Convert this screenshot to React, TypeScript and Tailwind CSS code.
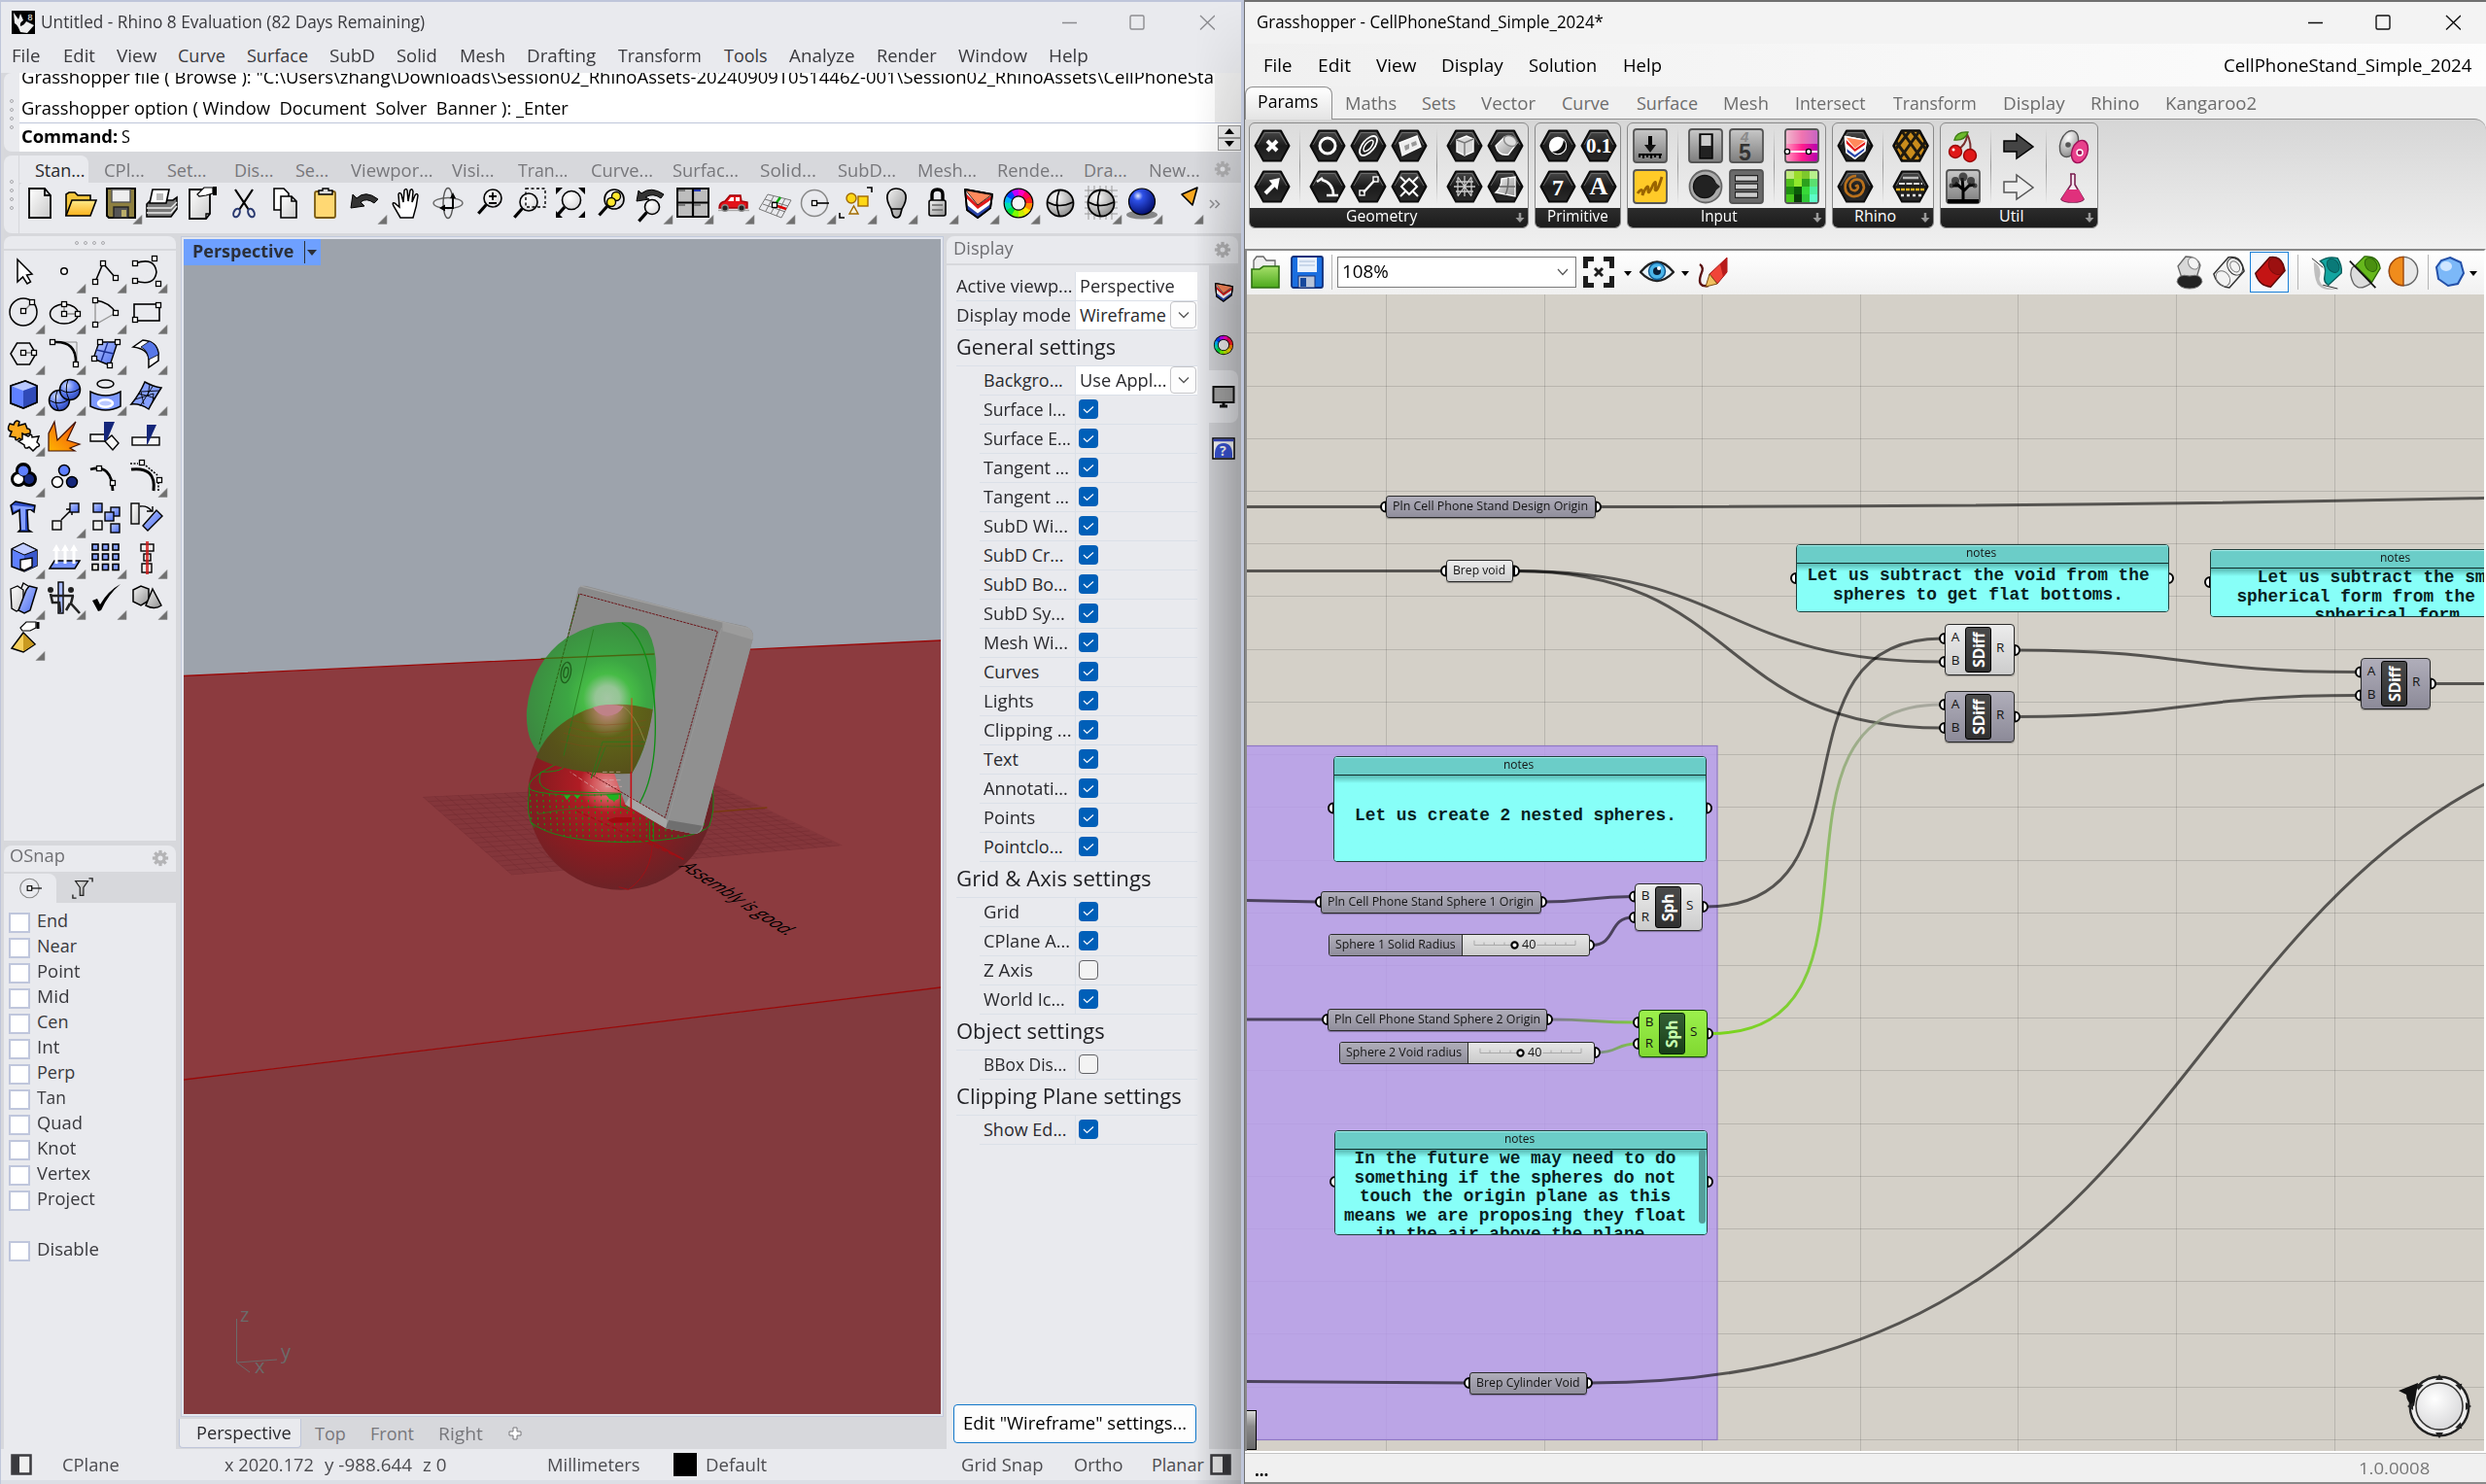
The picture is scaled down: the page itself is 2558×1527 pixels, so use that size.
import React, { useLayoutEffect, useRef, useState } from "react";
import type { ReactNode } from "react";

/* ---------- text helpers ---------- */

/** Single-line label squeezed or stretched to an exact width. */
function Fit({ w, className = "", children }: { w: number; className?: string; children: ReactNode }) {
  const ref = useRef<HTMLSpanElement>(null);
  const [scale, setScale] = useState(1);
  useLayoutEffect(() => {
    if (ref.current) setScale(w / ref.current.offsetWidth);
  }, [w]);
  return (
    <span className={`inline-block shrink-0 whitespace-pre text-left ${className}`} style={{ width: w }}>
      <span ref={ref} className="inline-block origin-left" style={{ transform: `scaleX(${scale})` }}>
        {children}
      </span>
    </span>
  );
}

type Slot = [string, number, number];

/** Labels in a row: [text, start, text width]; each slot runs to the next start. */
function Labels({ items }: { items: Slot[] }) {
  return (
    <>
      {items.map(([t, x, w], i) => (
        <span key={i} className="shrink-0" style={{ width: i + 1 < items.length ? items[i + 1][1] - x : w }}>
          <Fit w={w}>{t}</Fit>
        </span>
      ))}
    </>
  );
}

function Gear({ className = "" }: { className?: string }) {
  return (
    <svg viewBox="0 0 20 20" className={`size-[18px] shrink-0 ${className}`}>
      <g fill="#b4b4b6">
        {[0, 45, 90, 135].map((a) => (
          <rect key={a} x="8.2" y="1" width="3.6" height="18" transform={`rotate(${a} 10 10)`} />
        ))}
        <circle cx="10" cy="10" r="6.5" />
      </g>
      <circle cx="10" cy="10" r="2.8" fill="#e9eaee" />
    </svg>
  );
}

function Cell({ children, more }: { children?: ReactNode; more?: boolean }) {
  return (
    <svg viewBox="0 0 42 42" className="size-[42px] shrink-0 overflow-visible" fill="none" stroke="#000" strokeWidth="1.4">
      {children}
      {more && <path d="M42 33.5V42.5H33Z" fill="#707070" stroke="#8a8a8a" strokeWidth=".6" />}
    </svg>
  );
}

const Sq = ({ x, y }: { x: number; y: number }) => (
  <rect x={x - 2.5} y={y - 2.5} width="5" height="5" fill="#fff" stroke="#000" strokeWidth="1.3" />
);

/* ---------- shared gradients ---------- */

function Defs() {
  return (
    <svg className="absolute size-0">
      <defs>
        <linearGradient id="paper" x1="0" y1="0" x2="1" y2="1">
          <stop offset="0" stopColor="#fff" />
          <stop offset="1" stopColor="#c9c9c9" />
        </linearGradient>
        <linearGradient id="yellow" x1="0" y1="0" x2="0" y2="1">
          <stop offset="0" stopColor="#ffe98a" />
          <stop offset="1" stopColor="#fbb11c" />
        </linearGradient>
        <linearGradient id="orange" x1="0" y1="1" x2="1" y2="0">
          <stop offset="0" stopColor="#ffb400" />
          <stop offset="1" stopColor="#f04a10" />
        </linearGradient>
        <linearGradient id="blue" x1="0" y1="0" x2="1" y2="1">
          <stop offset="0" stopColor="#b9c8ff" />
          <stop offset="1" stopColor="#4a6cf0" />
        </linearGradient>
        <linearGradient id="gray" x1="0" y1="0" x2="1" y2="1">
          <stop offset="0" stopColor="#f4f4f4" />
          <stop offset="1" stopColor="#8f8f8f" />
        </linearGradient>
        <radialGradient id="bball" cx=".35" cy=".3" r=".75">
          <stop offset="0" stopColor="#cfdcff" />
          <stop offset=".5" stopColor="#5d7df2" />
          <stop offset="1" stopColor="#2c47b8" />
        </radialGradient>
        <radialGradient id="navy" cx=".35" cy=".28" r=".75">
          <stop offset="0" stopColor="#dfe8ff" />
          <stop offset=".25" stopColor="#2d50e8" />
          <stop offset="1" stopColor="#020d6b" />
        </radialGradient>
        <radialGradient id="gball" cx=".35" cy=".3" r=".75">
          <stop offset="0" stopColor="#fff" />
          <stop offset="1" stopColor="#8c8c8c" />
        </radialGradient>
        <radialGradient id="lens" cx=".4" cy=".35" r=".75">
          <stop offset="0" stopColor="#fff" />
          <stop offset="1" stopColor="#d4d4d6" />
        </radialGradient>
        <linearGradient id="hex" x1="0" y1="0" x2="0" y2="1">
          <stop offset="0" stopColor="#4a4a4a" />
          <stop offset=".5" stopColor="#1b1b1b" />
          <stop offset="1" stopColor="#2a2a2a" />
        </linearGradient>
        <linearGradient id="tile" x1="0" y1="0" x2="0" y2="1">
          <stop offset="0" stopColor="#c8c8c8" />
          <stop offset="1" stopColor="#7d7d7d" />
        </linearGradient>
        <linearGradient id="pink" x1="0" y1="0" x2="1" y2="0">
          <stop offset="0" stopColor="#ff9fc4" />
          <stop offset=".5" stopColor="#ff1e8c" />
          <stop offset="1" stopColor="#b300b0" />
        </linearGradient>
        <linearGradient id="fold" x1="0" y1="0" x2="0" y2="1">
          <stop offset="0" stopColor="#a6e06a" />
          <stop offset="1" stopColor="#4ca91c" />
        </linearGradient>
      </defs>
    </svg>
  );
}

function ColorWheel({ cx, cy, r, w }: { cx: number; cy: number; r: number; w: number }) {
  const c = ["#00e0b0", "#00e040", "#7dff00", "#c8f000", "#ffe600", "#ff8a00", "#ff2020", "#ff0060", "#ff00c0", "#c000ff", "#0040ff", "#00b0ff"].reverse();
  const L = 2 * Math.PI * r;
  return (
    <g>
      <circle cx={cx} cy={cy} r={r} stroke="#000" strokeWidth={w + 2.4} fill="#f4f4f4" />
      {c.map((k, i) => (
        <circle key={k} cx={cx} cy={cy} r={r} stroke={k} strokeWidth={w} fill="none" strokeDasharray={`${L / 12 + 0.4} ${L}`} transform={`rotate(${180 + i * 30} ${cx} ${cy})`} />
      ))}
    </g>
  );
}

const LayerIcon = () => (
  <g strokeLinejoin="round">
    <path d="M7 7L35 12L33 26L20 36L9 28Z" fill="#fff" strokeWidth="1.800" />
    <path d="M8 11L20 23L35 13L34.500 17L20 27L8.500 16Z" fill="#e01818" stroke="none" />
    <path d="M9 23L20 31.500L34 21.500L33 26L20 36L9 28Z" fill="#2743a8" stroke="none" />
    <path d="M7 7L35 12L20 23Z" fill="#ff8a5c" strokeWidth=".8" />
    <path d="M7 7L35 12L33 26L20 36L9 28Z" strokeWidth="1.800" fill="none" />
  </g>
);

/* ---------- main toolbar icons ---------- */

const mag = (cx: number, cy: number, r: number) => (
  <>
    <path d={`M${cx - r * 0.75} ${cy + r * 0.75}L${cx - r * 0.75 - 8} ${cy + r * 0.75 + 9}`} strokeWidth="3.2" />
    <circle cx={cx} cy={cy} r={r} fill="url(#lens)" strokeWidth="1.6" />
  </>
);
const undo = <path d="M5 26L7 12L11 16Q20 7 33 17L29 21Q21 15 15 20L19 24Z" fill="#333" strokeWidth="1" />;

const topIcons: [ReactNode, boolean][] = [
  [<path d="M10 6H26L32 13V36H10Z M26 6V13H32" fill="url(#paper)" strokeWidth="1.8" />, false],
  [
    <>
      <path d="M6 34V12L9 10H15L18 13H31V18" fill="#f4c63c" strokeWidth="1.6" />
      <path d="M6 34L12 18H37L31 34Z" fill="url(#yellow)" strokeWidth="1.6" />
    </>,
    false,
  ],
  [
    <>
      <path d="M6 6H35V36H8L6 34Z" fill="#8e8040" strokeWidth="2" />
      <rect x="11" y="7" width="19" height="13" fill="#eee" stroke="#555" />
      <rect x="13" y="25" width="15" height="11" fill="#555" stroke="#222" />
      <rect x="21" y="28" width="5" height="7" fill="#b9ad6a" stroke="none" />
    </>,
    true,
  ],
  [
    <>
      <path d="M5 22L9 18H32L36 15V27L30 35H5Z" fill="#777" strokeWidth="1.6" />
      <path d="M11 7H28L25 21H8Z" fill="#fff" strokeWidth="1.6" />
      <rect x="15" y="11" width="7" height="7" fill="#bbb" stroke="none" />
      <path d="M5 26H30L36 20M5 31H30L36 24" stroke="#eee" />
    </>,
    false,
  ],
  [
    <>
      <path d="M7 7H28V32L24 37H7Z" fill="url(#paper)" strokeWidth="1.8" />
      <path d="M24 37V32H28" />
      <path d="M15 12L22 5L31 5V11L24 13L17 14Z" fill="#fff" strokeWidth="1.2" />
      <path d="M33 4V13" strokeWidth="4" />
    </>,
    false,
  ],
  [
    <>
      <path d="M12 7L26 28M30 7L16 28" strokeWidth="2.2" />
      <ellipse cx="13.5" cy="31" rx="3" ry="4.5" stroke="#2a3a70" strokeWidth="2" transform="rotate(25 13.5 31)" />
      <ellipse cx="28.5" cy="31" rx="3" ry="4.5" stroke="#2a3a70" strokeWidth="2" transform="rotate(-25 28.5 31)" />
    </>,
    false,
  ],
  [
    <>
      <path d="M10 6H20L25 11V28H10Z" fill="#fff" strokeWidth="1.6" />
      <path d="M17 14H28L33 19V36H17Z M28 14V19H33" fill="url(#paper)" strokeWidth="1.6" />
    </>,
    false,
  ],
  [
    <>
      <rect x="10" y="9" width="21" height="27" rx="2" fill="#ffd873" stroke="#7a5a10" strokeWidth="1.8" />
      <path d="M14 12V8H18V6H24V8H28V12Z" fill="#ddd" strokeWidth="1.4" />
    </>,
    false,
  ],
  [undo, true],
  [
    <path d="M14 36L7 24Q5 20 8 21L13 25L12 12Q13 9 15 12L17 20L18 8Q20 5 21 8L22 19L24 8Q26 5 27 9L26 20L29 13Q31 10 32 13Q31 24 27 36Z" fill="#fff" strokeWidth="1.5" />,
    false,
  ],
  [
    <>
      <ellipse cx="21" cy="21" rx="15" ry="5.5" stroke="#666" />
      <ellipse cx="21" cy="21" rx="5" ry="15.5" stroke="#555" />
      <path d="M26 14V27M16 26H27" strokeWidth="2" />
      <path d="M23 16L26 10L29 16ZM12 26L18 22.500V29.500Z" fill="#000" stroke="none" />
    </>,
    false,
  ],
  [
    <>
      {mag(25, 16, 9)}
      <path d="M21 14H29M25 10V18M21 21H29" strokeWidth="1.8" />
    </>,
    false,
  ],
  [
    <>
      {mag(20, 20, 9)}
      <rect x="17" y="6" width="20" height="19" strokeDasharray="3 2.5" />
    </>,
    false,
  ],
  [
    <>
      {mag(22, 18, 9.5)}
      <path d="M6 5H13L6 12ZM36 5H29L36 12ZM6 36V29L13 36ZM36 36V29L29 36Z" fill="#000" stroke="none" />
    </>,
    false,
  ],
  [
    <>
      {mag(24, 17, 10)}
      <circle cx="26" cy="14" r="4.5" fill="#ffe92e" />
      <circle cx="21" cy="20" r="4.5" fill="#ffe92e" />
    </>,
    false,
  ],
  [
    <>
      <path d="M5 19L7 8L10 11Q20 3 33 12L30 16Q22 10 14 15L18 17Z" fill="#333" strokeWidth="1" />
      {mag(21, 25, 7.5)}
    </>,
    true,
  ],
  [
    <>
      <rect x="5" y="6" width="32" height="29" fill="#bdbdbd" strokeWidth="2" />
      <path d="M5 20.5H37M21 6V35" strokeWidth="2.2" />
      <path d="M6 8H13M6 23H13M22 23H29" stroke="#777" strokeWidth="2" />
      <path d="M22 8H29" stroke="#2438b0" strokeWidth="2" />
    </>,
    true,
  ],
  [
    <>
      <path d="M6 26Q6 20 12 19L17 13H28L29 19L35 20V26Z" fill="#e3121a" stroke="#a00008" />
      <path d="M15 19L18 15H21V19ZM23 15H27V19H23Z" fill="#fff" stroke="none" />
      <path d="M5 28.5H37" stroke="#aaa" />
      <circle cx="12" cy="26" r="3.2" fill="#222" stroke="#888" />
      <circle cx="29" cy="26" r="3.2" fill="#222" stroke="#888" />
    </>,
    true,
  ],
  [
    <>
      <path d="M14 12L38 18L28 36L5 27ZM9 22L32 30M11 17L35 24M20 14L12 29M26 15L17 32M32 16L23 34" stroke="#777" strokeWidth="1" />
      <path d="M21 23L33 27" stroke="#d00" strokeWidth="2.4" />
      <path d="M22 22L27 15" stroke="#0a0" strokeWidth="2.4" />
      <Sq x={21} y={23} />
    </>,
    true,
  ],
  [
    <>
      <circle cx="20" cy="21" r="13.5" stroke="#888" strokeWidth="1.5" />
      <path d="M20 21H35" strokeWidth="1.6" />
      <Sq x={20} y={21} />
    </>,
    true,
  ],
  [
    <>
      <path d="M32 5H37V10M4 31V36H9" strokeWidth="1.6" />
      <circle cx="16" cy="16" r="5" fill="#ffd815" stroke="#a06a00" />
      <rect x="23" y="14" width="10" height="10" fill="#ffd815" stroke="#a06a00" />
      <path d="M14 32L18.500 24L23 32Z" stroke="#a06a00" fill="#f6f1dd" />
    </>,
    true,
  ],
  [<path d="M16 31L15 27Q10 19 11 13Q13 6 20 6Q28 6 30 13Q31 19 26 27L25 31Q24 36 20.500 36Q17 36 16 31ZM15 27H26" fill="url(#gray)" strokeWidth="1.7" />, true],
  [
    <>
      <path d="M15 18V12Q15 7 20.500 7Q26 7 26 12V18" strokeWidth="3.4" />
      <rect x="12" y="18" width="17" height="16" rx="2" fill="url(#gray)" strokeWidth="1.6" />
      <path d="M15 23H26M15 28H26" stroke="#666" />
    </>,
    true,
  ],
  [<LayerIcon />, true],
  [<ColorWheel cx={20} cy={21} r={11} w={6.5} />, true],
  [
    <>
      <circle cx="21" cy="21" r="13.500" fill="url(#gball)" strokeWidth="1.8" />
      <path d="M8 20Q20 27 34 20M20 8Q15 20 20 34" strokeWidth="1.6" />
    </>,
    false,
  ],
  [
    <>
      <path d="M8 3V38M14 3V38M20 3V38M26 3V38M32 3V38M4 8H38M4 14H38M4 20H38M4 26H38M4 32H38" stroke="#999" strokeWidth="1" />
      <circle cx="21" cy="21" r="13.500" fill="url(#gball)" strokeWidth="1.8" />
      <path d="M8 20Q20 27 34 20M20 8Q15 20 20 34" strokeWidth="1.6" />
    </>,
    true,
  ],
  [
    <>
      <ellipse cx="21" cy="33" rx="16" ry="4.500" fill="#444" fillOpacity=".6" stroke="none" />
      <circle cx="21" cy="19.500" r="13.500" fill="url(#navy)" strokeWidth="1.200" />
    </>,
    true,
  ],
  [<path d="M20 12L36 5L31 23Z" fill="#f8a820" strokeWidth="1.6" strokeLinejoin="round" />, true],
];

/* ---------- left tool icons ---------- */

const box = (
  <>
    <path d="M7 12L22 7L34 12V29L20 35L7 30Z" fill="#5f80ff" strokeWidth="1.6" strokeLinejoin="round" />
    <path d="M7 12L22 7L34 12L20 17Z" fill="#b9c8ff" stroke="none" />
    <path d="M34 12V29L20 35V17Z" fill="#2f4ab8" stroke="none" />
    <path d="M7 12L22 7L34 12V29L20 35L7 30Z" strokeWidth="1.600" strokeLinejoin="round" />
  </>
);

const tools: [ReactNode, boolean][] = [
  [<path d="M14 8V31L19.500 26L24 33L27.500 31L23.500 24L29 23Z" fill="#fff" strokeWidth="1.500" />, false],
  [<circle cx="20" cy="20" r="3.300" fill="#fff" strokeWidth="1.500" />, true],
  [
    <>
      <path d="M10 31L18 12L31 27" strokeWidth="1.600" />
      <Sq x={10} y={31} /><Sq x={18} y={12} /><Sq x={31} y={27} />
    </>,
    true,
  ],
  [
    <>
      <path d="M9 12Q29 5 31 21Q29 36 9 30" strokeWidth="1.600" />
      <Sq x={9} y={12} /><Sq x={29} y={7} /><Sq x={9} y={30} /><Sq x={33} y={33} />
    </>,
    true,
  ],
  [
    <>
      <circle cx="20" cy="20" r="14" strokeWidth="1.500" />
      <path d="M20 20L29 10" stroke="#888" />
      <Sq x={20} y={19} /><Sq x={29} y={10} />
    </>,
    true,
  ],
  [
    <>
      <ellipse cx="20" cy="22" rx="14.500" ry="10" strokeWidth="1.500" />
      <path d="M20 22V12M20 22H34" stroke="#888" />
      <Sq x={20} y={22} /><Sq x={20} y={12} /><Sq x={34} y={22} />
    </>,
    true,
  ],
  [
    <>
      <path d="M10 8V33L31 21" stroke="#999" />
      <path d="M10 8Q25 10 31 21" strokeWidth="1.600" />
      <Sq x={10} y={8} /><Sq x={10} y={33} /><Sq x={31} y={21} />
    </>,
    true,
  ],
  [
    <>
      <rect x="8" y="12" width="26" height="17" strokeWidth="1.600" />
      <Sq x={33} y={13} /><Sq x={9} y={28} />
    </>,
    true,
  ],
  [
    <>
      <path d="M7 21L13.500 10H26.500L33 21L26.500 32H13.500Z" strokeWidth="1.500" />
      <path d="M20 20H31" stroke="#777" />
      <Sq x={20} y={20} /><Sq x={31} y={20} />
    </>,
    true,
  ],
  [
    <>
      <path d="M10 9H33V31" stroke="#888" strokeWidth="1" />
      <path d="M10 9Q33 8 32 31" strokeWidth="2.600" />
      <Sq x={8} y={9} /><Sq x={32} y={32} />
    </>,
    true,
  ],
  [
    <>
      <path d="M14 9L33 9L25 33L8 26Z" fill="url(#blue)" strokeWidth="1.400" />
      <path d="M23 9L16 29M11 17L29 21" stroke="#1a2f90" />
      <Sq x={15} y={9} /><Sq x={33} y={9} /><Sq x={9} y={26} /><Sq x={25} y={33} />
    </>,
    true,
  ],
  [
    <>
      <path d="M7 14L17 7Q31 8 33 20V28L23 35V26Q22 16 7 14Z" fill="#fff" strokeWidth="1.500" />
      <path d="M15 14L24 8Q31 11 33 20V22L23 27Q22 17 15 14Z" fill="#5878e8" strokeWidth=".8" />
    </>,
    true,
  ],
  [box, true],
  [
    <>
      <circle cx="15" cy="27" r="10.500" fill="url(#bball)" strokeWidth="1.500" />
      <path d="M5 27Q15 33 25 26M13 17Q9 27 14 37" strokeWidth="1" />
      <circle cx="26" cy="16" r="10.500" fill="url(#bball)" strokeWidth="1.500" />
      <path d="M16 16Q26 22 36 15M24 6Q20 16 25 26" strokeWidth="1" />
    </>,
    true,
  ],
  [
    <>
      <ellipse cx="20.500" cy="10" rx="8.500" ry="4" strokeWidth="1.500" />
      <path d="M5 18Q21 26 36 18V33Q21 41 5 33Z" fill="#7d99ff" strokeWidth="1.500" />
      <ellipse cx="20.500" cy="30" rx="7.500" ry="3.800" stroke="#fff" strokeWidth="2.600" fill="#b9c8ff" />
    </>,
    true,
  ],
  [
    <>
      <path d="M19 8Q28 13 36 14Q27 28 23 36Q14 30 5 31Q14 20 19 8Z" fill="#86a0ff" strokeWidth="1.500" />
      <path d="M12 20Q22 22 30 25M9 26L28 20L27 29M28 11Q20 24 14 33M18 31L15 18L34 17M24 11L22 22" strokeWidth=".9" />
    </>,
    true,
  ],
  [
    <>
      <path d="M6 9L10 10Q12 4 16 7L15 11L22 9L24 14Q28 14 27 19L22 20L20 27L16 24Q11 28 12 23L6 22L8 17Q2 16 6 9Z" fill="#f9a81c" strokeWidth="1.500" />
      <path d="M19 19L25 22Q29 18 29 23L36 22L34 28Q39 32 34 33L30 37L26 33Q21 36 21 31L15 27L19 25Z" fill="#fff" strokeWidth="1.500" />
    </>,
    true,
  ],
  [<path d="M4 37V19L10 7L13 26L32 7L23 26L36 30L26 34L31 37Z" fill="url(#orange)" strokeWidth="1.200" stroke="#401000" />, false],
  [
    <>
      <path d="M5 20H20L23 27H5Z" fill="#f6f6f6" />
      <path d="M20 27L27 21L34 29L28 36Z" fill="#f6f6f6" />
      <path d="M19 7H30L22 26H19Z" fill="#14267a" stroke="none" />
    </>,
    false,
  ],
  [
    <>
      <rect x="6" y="23" width="28" height="8" fill="#f6f6f6" />
      <path d="M21 10H31L22 30H21Z" fill="#14267a" stroke="none" />
    </>,
    false,
  ],
  [
    <>
      <g strokeWidth="6"><circle cx="20" cy="15" r="5" /><circle cx="15" cy="24" r="5" /><circle cx="26" cy="24" r="5" /></g>
      <circle cx="15" cy="24" r="5" fill="#fff" stroke="none" />
      <circle cx="26" cy="24" r="5" fill="#14267a" stroke="none" />
      <circle cx="20" cy="15.500" r="5.500" fill="#5f80ff" strokeWidth=".8" />
    </>,
    true,
  ],
  [
    <>
      <circle cx="20" cy="15" r="5.500" fill="#5f80ff" strokeWidth="1.500" />
      <circle cx="13" cy="27" r="5.500" fill="#fff" strokeWidth="1.500" />
      <circle cx="28" cy="27" r="5.500" fill="#14267a" strokeWidth="1.500" />
    </>,
    false,
  ],
  [
    <>
      <path d="M5 14Q27 8 28 36" strokeWidth="2.800" />
      <Sq x={14} y={13} /><Sq x={28} y={28} />
    </>,
    false,
  ],
  [
    <>
      <path d="M5 14Q31 11 28 36" strokeWidth="3" />
      <path d="M4 8H12M20 10L32 20M33 27V37" strokeDasharray="2 1.500" strokeWidth="1.600" />
      <Sq x={16} y={7} /><Sq x={34} y={25} />
    </>,
    true,
  ],
  [
    <>
      <path d="M7 9L12 5L32 9L31 16L27 13L24 14L25 34L28 36H15L17 34L16 14L9 18Z" fill="#2a49c0" strokeWidth="1.500" />
      <path d="M9 9L31 11L29 13L22 13V34L18 34L17 12L10 15Z" fill="#86a0ff" stroke="none" />
    </>,
    false,
  ],
  [
    <>
      <path d="M17 24L28 13M22 13H28V19" strokeWidth="1.500" />
      <rect x="8" y="25" width="9" height="9" fill="#eee" />
      <rect x="26" y="7" width="9" height="9" fill="url(#blue)" />
    </>,
    true,
  ],
  [
    <>
      <rect x="8" y="7" width="9" height="9" fill="url(#blue)" />
      <rect x="26" y="11" width="9" height="9" fill="url(#blue)" />
      <rect x="20" y="16" width="9" height="9" fill="url(#blue)" />
      <rect x="8" y="25" width="9" height="9" fill="#eee" />
      <rect x="26" y="28" width="9" height="9" fill="url(#blue)" />
    </>,
    false,
  ],
  [
    <>
      <rect x="5" y="7" width="8" height="21" fill="url(#paper)" />
      <path d="M14 10Q22 9 26 15M21 15H27V10" />
      <path d="M17 30L31 14L37 20L22 35Z" fill="url(#blue)" />
    </>,
    false,
  ],
  [
    <>
      <path d="M8 12L20 6L34 13V29L21 35L8 30Z" fill="#5f80ff" strokeWidth="1.500" />
      <path d="M34 13V29L21 35V18Z" fill="#3a58cc" stroke="none" />
      <path d="M8 12L20 6L34 13L21 18Z" fill="#c0ccff" strokeWidth="1" />
      <path d="M17 23L29 21V30L21 34L17 32Z" fill="#fff" />
    </>,
    true,
  ],
  [
    <>
      <path d="M5 32L10 24H36L31 32Z" fill="#7390ff" strokeWidth="1.500" />
      <path d="M12 27V12M21 27V12M30 27V12" stroke="#fff" strokeWidth="3" />
      <path d="M8 14L12 7L16 14ZM17 14L21 7L25 14ZM26 14L30 7L34 14Z" fill="#fff" stroke="none" />
    </>,
    true,
  ],
  [
    <>
      {[8, 18.500, 29].map((x) =>
        [8, 18, 28.500].map((y) => (
          <rect key={`${x}-${y}`} x={x - 1} y={y - 1} width="6" height="6" fill={x === 8 && y > 28 ? "#f2f2e6" : "#86a0ff"} strokeWidth="1.600" />
        )),
      )}
    </>,
    true,
  ],
  [
    <>
      <rect x="15" y="7" width="13" height="7" fill="#eee" /><rect x="18" y="17" width="7" height="7" fill="#eee" /><rect x="16" y="27" width="10" height="9" fill="#eee" />
      <path d="M21.500 4V38" stroke="#d01818" strokeWidth="3" strokeOpacity=".8" />
    </>,
    true,
  ],
  [
    <>
      <path d="M7 11L14 8L20 12V30L13 34L8 31Z" fill="url(#paper)" strokeWidth="1.300" />
      <path d="M18 10L20 5L25 8" />
      <path d="M26 8L34 10L27 33L21 36L15 33L23 12Z" fill="url(#blue)" strokeWidth="1.500" />
    </>,
    true,
  ],
  [
    <>
      <rect x="14" y="4" width="5" height="32" fill="#a7baff" />
      <circle cx="6" cy="12" r="3" fill="#222" stroke="none" /><circle cx="27" cy="12" r="3" fill="#222" stroke="none" />
      <path d="M6 16L8 25H15L16 35M6 18H30M29 18L27 26L36 36M26 26L22 33" stroke="#222" strokeWidth="2.600" />
    </>,
    true,
  ],
  [<path d="M7 23L12 21L15 27Q23 13 36 6Q23 17 16 33L13 34Z" fill="#000" stroke="none" />, true],
  [
    <>
      <path d="M7 12L15 8L23 11V23L15 28L7 24Z" fill="url(#gray)" strokeWidth="1.500" />
      <path d="M27 11L36 28Q29 33 20 28Z" fill="url(#gray)" strokeWidth="1.500" />
    </>,
    true,
  ],
  [
    <>
      <path d="M17 9L23 3H33V9L27 12H19Z" fill="#fff" strokeWidth="1.200" />
      <path d="M35 3V10" strokeWidth="3" />
      <path d="M20 14L32 26L20 34L8 30Z" fill="#f6d05c" strokeWidth="1.500" />
      <path d="M20 15L31 26L20 33Z" fill="#c99a20" stroke="none" />
    </>,
    true,
  ],
];

/* ---------- Rhino window ---------- */

const rhinoMenu: Slot[] = [
  ["File", 12, 30], ["Edit", 65, 33], ["View", 120, 41], ["Curve", 183, 49], ["Surface", 254, 63], ["SubD", 339, 47],
  ["Solid", 408, 42], ["Mesh", 473, 47], ["Drafting", 542, 71], ["Transform", 636, 86], ["Tools", 745, 45],
  ["Analyze", 812, 68], ["Render", 902, 62], ["Window", 986, 71], ["Help", 1079, 41],
];
const rhinoTabs: Slot[] = [
  ["CPl...", 107, 42], ["Set...", 172, 41], ["Dis...", 241, 40], ["Se...", 304, 34], ["Viewpor...", 361, 85],
  ["Visi...", 465, 44], ["Tran...", 533, 52], ["Curve...", 608, 64], ["Surfac...", 692, 68], ["Solid...", 782, 58],
  ["SubD...", 862, 60], ["Mesh...", 944, 61], ["Rende...", 1026, 69], ["Dra...", 1115, 45], ["New...", 1182, 53],
];

function Dots({ vertical }: { vertical?: boolean }) {
  return (
    <div className={`flex items-center justify-center gap-[5px] ${vertical ? "flex-col" : ""}`}>
      {[0, 1, 2, 3].map((i) => (
        <span key={i} className="size-1 rounded-full border border-[#a9a9ad]" />
      ))}
    </div>
  );
}

function WinButtons({ color }: { color: string }) {
  return (
    <svg viewBox="0 0 160 20" className="h-5 w-[160px] shrink-0" fill="none" stroke={color} strokeWidth="1.4">
      <path d="M3 10.500H18M145 3L160 17.500M160 3L145 17.500" />
      <rect x="73" y="3" width="14" height="14" rx="1.500" />
    </svg>
  );
}

function Scene() {
  return (
    <svg viewBox="0 0 779 1209" preserveAspectRatio="none" className="block h-full w-full bg-[#9da3ac]">
      <defs>
        <radialGradient id="gs" cx="315" cy="412" r="290" gradientUnits="userSpaceOnUse">
          <stop offset="0" stopColor="#a3c6a3" />
          <stop offset=".13" stopColor="#95c595" />
          <stop offset=".26" stopColor="#46bb46" />
          <stop offset=".42" stopColor="#3ca643" />
          <stop offset="1" stopColor="#3c8240" />
        </radialGradient>
        <radialGradient id="rs" cx="315" cy="680" r="330" gradientUnits="userSpaceOnUse">
          <stop offset="0" stopColor="#e08a8c" />
          <stop offset=".13" stopColor="#d4585c" />
          <stop offset=".26" stopColor="#b01c24" />
          <stop offset=".6" stopColor="#8c1b20" />
          <stop offset="1" stopColor="#6a2327" />
        </radialGradient>
        <radialGradient id="ol" cx="315" cy="450" r="330" gradientUnits="userSpaceOnUse">
          <stop offset="0" stopColor="#c8888c" />
          <stop offset=".12" stopColor="#9a7a50" />
          <stop offset=".25" stopColor="#5f6418" />
          <stop offset=".6" stopColor="#57511a" />
          <stop offset="1" stopColor="#4f4520" />
        </radialGradient>
        <clipPath id="gridclip"><path d="M-255 717L640 675L1040 867L20 958Z" /></clipPath>
        <clipPath id="band"><path d="M70 700Q110 712 370 708V740L640 740Q645 780 630 810Q560 850 375 858Q150 850 78 800Q68 750 70 700Z" /></clipPath>
      </defs>
      <path d="M0 449.500L779 413V770L0 865Z" fill="#8c3b3f" />
      <path d="M0 865L779 770V1209H0Z" fill="#833a3e" />
      <path d="M0 449.500L779 413M0 865L779 770" stroke="#9a0808" strokeWidth="1.300" />
      <g transform="translate(331 335) scale(.33333)" fill="none">
        <path d="M-255 717L640 675L1040 867L20 958Z" fill="#80343a" fillOpacity=".7" />
        <g clipPath="url(#gridclip)" stroke="#6c272d" strokeWidth="2" strokeOpacity=".5">
          {Array.from({ length: 26 }, (_, i) => (
            <path key={i} d={`M${-255 + i * 36} ${717 - i * 1.7}L${20 + i * 41} ${958 - i * 3.6}`} />
          ))}
          {Array.from({ length: 18 }, (_, i) => (
            <path key={i} d={`M${-255 + i * 16} ${717 + i * 14.200}L${640 + i * 23} ${675 + i * 11.300}`} />
          ))}
        </g>
        <path d="M560 770L808 750" stroke="#7a3a10" strokeWidth="4" />
        <circle cx="356" cy="717" r="287" fill="url(#rs)" />
        <path d="M450 810Q470 940 380 1003L350 995" stroke="#a01016" strokeWidth="3" />
        <g clipPath="url(#band)" stroke="#12a012" strokeWidth="3" strokeDasharray="7 11">
          {Array.from({ length: 28 }, (_, i) => (
            <path key={i} d={`M${75 + i * 20} 690L${85 + i * 19.500} 860`} />
          ))}
        </g>
        <path d="M75 690Q60 660 180 605Q200 640 110 640Q90 690 150 700L355 706V745L385 760M70 690Q110 720 375 708M78 795Q150 855 375 857Q590 850 632 805M75 690Q60 780 90 812M265 660L300 547H430M275 650L310 560H425M445 790V850L457 852V790M640 690Q648 760 630 805" stroke="#178a17" strokeWidth="3" />
        <path d="M180 712L190 726L202 712ZM212 712L222 724L232 712ZM312 710H350V722L335 730L320 722Z" fill="#21b421" />
        <path d="M100 770Q240 740 390 750" stroke="#178a17" strokeWidth="2" />
        <path d="M220 760L550 910" stroke="#a00f14" strokeWidth="4" strokeDasharray="16 8" />
        <path d="M440 850L550 910" stroke="#a00f14" strokeWidth="5" />
        <path d="M190 230L225 75Q232 62 250 66L655 172L740 190Q766 200 765 225L608 815Q600 832 580 831L495 814L370 740Z" fill="#8a8a8a" />
        <path d="M668 205L672 178L745 192Q766 202 765 225L608 815Q600 832 580 831L495 814L500 800Z" fill="#909090" />
        <path d="M670 178L745 192Q766 202 765 225L764 232L670 205Z" fill="#9c9c9c" />
        <path d="M500 788L608 806Q600 832 580 831L495 814Z" fill="#6f6f6f" />
        <path d="M370 740L495 814L502 790L385 715Z" fill="#a6a6a6" />
        <path d="M232 66L655 173L755 199" stroke="#a0a0a0" strokeWidth="4" />
        <path d="M668 195L500 795" stroke="#969696" strokeWidth="4" />
        <path d="M105 555L228 90L655 206L493 781L105 555" stroke="#6b1418" strokeWidth="3" strokeDasharray="8 3" />
        <path d="M130 605Q60 560 66 450Q80 300 190 225Q270 178 350 177Q420 175 440 205Q470 260 465 350Q462 440 440 520Q425 590 390 645Q200 645 130 605Z" fill="url(#gs)" />
        <path d="M95 595Q130 500 250 448Q340 415 455 447Q440 560 390 645Q190 650 95 595Z" fill="url(#ol)" />
        <path d="M270 440Q315 425 365 438Q350 465 315 467Q285 465 270 440Z" fill="#bf8288" />
        <path d="M105 555L228 90" stroke="#2c5f12" strokeWidth="3" strokeDasharray="10 3" />
        <path d="M110 290L460 276" stroke="#4a6410" strokeWidth="4" />
        <path d="M272 200L180 590M265 660L300 547H430M275 650L310 560H425" stroke="#257a1c" strokeWidth="3" strokeOpacity=".8" />
        <g stroke="#8a4418" strokeWidth="2" strokeOpacity=".6">
          <path d="M180 520Q290 555 430 520M190 500Q290 535 430 500M200 480Q300 510 435 480M170 545Q290 580 420 545" />
        </g>
        <ellipse cx="187" cy="333" rx="15" ry="32" stroke="#1f5f1c" strokeWidth="4" transform="rotate(10 187 333)" />
        <ellipse cx="187" cy="333" rx="7" ry="16" stroke="#1f5f1c" strokeWidth="4" transform="rotate(10 187 333)" />
        <path d="M360 180Q440 220 460 420Q475 630 415 735" stroke="#0f8f14" strokeWidth="4" />
        <path d="M360 435Q400 460 430 545" stroke="#9a9a50" strokeWidth="2" />
        <path d="M390 412V640" stroke="#d2481e" strokeWidth="4" strokeOpacity=".8" />
        <path d="M388 640V790" stroke="#c41018" strokeWidth="5" />
        <path d="M290 700L200 640M300 640H355M300 665H360M310 685H360" stroke="#d9b0b0" strokeWidth="2" strokeDasharray="14 7" />
        <path d="M315 788L340 780H390V795L330 797Z" fill="#a00a10" />
        <text transform="matrix(.85 .545 -.85 .3 533 932)" fontSize="72" textLength="392" lengthAdjust="spacingAndGlyphs" className="font-['Open_Sans',sans-serif]" fill="#000">
          Assembly is good.
        </text>
      </g>
      <g stroke="#6b6b6b" fill="none">
        <path d="M54.500 1111V1156L96 1153M54.500 1156L68 1166" />
      </g>
      <g fill="#6b6b6b" fontSize="20" className="font-['Open_Sans',sans-serif]">
        <text x="58" y="1114">z</text>
        <text x="100" y="1152">y</text>
        <text x="73" y="1167">x</text>
      </g>
    </svg>
  );
}

const osnaps: [string, number][] = [
  ["End", 32], ["Near", 41], ["Point", 45], ["Mid", 34], ["Cen", 32], ["Int", 23], ["Perp", 39], ["Tan", 30],
  ["Quad", 47], ["Knot", 40], ["Vertex", 55], ["Project", 60],
];

function OsnapRow({ t, w }: { t: string; w: number }) {
  return (
    <div className="flex h-[26px] items-center gap-[7px] pl-[5px]">
      <span className="mt-0.5 h-[21px] w-[22px] border-2 border-[#bfc6dc] bg-white" />
      <Fit w={w} className="-mt-0.5">{t}</Fit>
    </div>
  );
}

type PRow = { t: string; w: number; v?: "on" | "off"; text?: string; tw?: number; drop?: boolean; top?: boolean };

const groups: { title?: string; w?: number; rows: PRow[] }[] = [
  {
    rows: [
      { t: "Active viewp...", w: 120, text: "Perspective", tw: 98, top: true },
      { t: "Display mode", w: 118, text: "Wireframe", tw: 89, drop: true, top: true },
    ],
  },
  {
    title: "General settings",
    w: 164,
    rows: [
      { t: "Backgro...", w: 82, text: "Use Appl...", tw: 90, drop: true },
      { t: "Surface I...", w: 85, v: "on" }, { t: "Surface E...", w: 90, v: "on" }, { t: "Tangent ...", w: 88, v: "on" },
      { t: "Tangent ...", w: 88, v: "on" }, { t: "SubD Wi...", w: 87, v: "on" }, { t: "SubD Cr...", w: 83, v: "on" },
      { t: "SubD Bo...", w: 86, v: "on" }, { t: "SubD Sy...", w: 84, v: "on" }, { t: "Mesh Wi...", w: 87, v: "on" },
      { t: "Curves", w: 57, v: "on" }, { t: "Lights", w: 52, v: "on" }, { t: "Clipping ...", w: 91, v: "on" },
      { t: "Text", w: 36, v: "on" }, { t: "Annotati...", w: 87, v: "on" }, { t: "Points", w: 53, v: "on" },
      { t: "Pointclo...", w: 82, v: "on" },
    ],
  },
  {
    title: "Grid & Axis settings",
    w: 201,
    rows: [
      { t: "Grid", w: 37, v: "on" }, { t: "CPlane A...", w: 89, v: "on" }, { t: "Z Axis", w: 51, v: "off" }, { t: "World Ic...", w: 84, v: "on" },
    ],
  },
  { title: "Object settings", w: 153, rows: [{ t: "BBox Dis...", w: 86, v: "off" }] },
  { title: "Clipping Plane settings", w: 232, rows: [{ t: "Show Ed...", w: 86, v: "on" }] },
];

function DisplayPanel() {
  return (
    <div className="flex w-[308px] shrink-0 flex-col pr-0.5 pl-1.5">
      <div className="mt-[3px] flex h-[28px] items-center justify-between rounded-t-lg bg-[#e9eaee] pr-[7px] pl-[7px] text-[18px] text-[#6f6f73]">
        <Fit w={62} className="-mt-1">Display</Fit>
        <Gear />
      </div>
      <div className="mt-0.5 flex min-h-0 flex-1">
        <div className="flex w-[270px] flex-col bg-[#e9eaee] pt-[6.500px] pb-1.5 pl-[10px]">
          {groups.map((g, gi) => (
            <div key={gi}>
              {g.title && (
                <div className="flex h-[37px] w-[248px] items-center border-b border-[#dbe0e8] text-[21px] leading-none text-[#1f1f23]">
                  <Fit w={g.w!}>{g.title}</Fit>
                </div>
              )}
              {g.rows.map((r, i) => (
                <div
                  key={i}
                  className={`flex h-[30px] items-stretch border-b border-[#dbe0e8] text-[18px] leading-[28px] text-[#2a2a2e] ${r.top ? "w-[248px]" : "ml-6 w-[224px] pl-1"}`}
                >
                  <Fit w={r.w}>{r.t}</Fit>
                  <span className="flex-1" />
                  <span className={`flex w-[126px] shrink-0 items-center border-l border-[#dbe0e8] ${r.text ? "bg-white pl-1" : "pl-[3px]"}`}>
                    {r.text && <Fit w={r.tw!}>{r.text}</Fit>}
                    {r.drop && (
                      <span className="mr-px ml-auto flex h-[28px] w-[27px] items-center justify-center rounded-sm border border-[#c4c4c8] bg-[#fdfdfd]">
                        <svg viewBox="0 0 12 8" className="h-2 w-3" fill="none" stroke="#555" strokeWidth="1.300"><path d="M1 1.500L6 6.500L11 1.500" /></svg>
                      </span>
                    )}
                    {r.v === "on" && (
                      <span className="flex size-5 items-center justify-center rounded bg-[#005fb8]">
                        <svg viewBox="0 0 12 9" className="h-[9px] w-3" fill="none" stroke="#fff" strokeWidth="1.200"><path d="M1 4L4.500 7.500L11 1.500" /></svg>
                      </span>
                    )}
                    {r.v === "off" && <span className="size-5 rounded border border-[#626266] bg-[#f3f3f3]" />}
                  </span>
                </div>
              ))}
            </div>
          ))}
          <div className="mt-auto -ml-[3px] flex h-10 w-[250px] items-center justify-center rounded border-[1.500px] border-[#1177c9] bg-[#fdfdfd] text-[18px] text-black">
            <Fit w={230} className="-mt-0.5">Edit "Wireframe" settings...</Fit>
          </div>
        </div>
        <div className="flex w-[30px] flex-col items-center bg-[#d5d6da]">
          <svg viewBox="0 0 42 42" className="mt-[14px] h-[27px] w-[27px]" fill="none" stroke="#000" strokeWidth="2"><LayerIcon /></svg>
          <svg viewBox="0 0 42 42" className="mt-[27px] h-[28px] w-7" fill="none"><ColorWheel cx={21} cy={21} r={11.500} w={5} /></svg>
          <div className="mt-[12px] flex h-[54px] w-[30px] items-center justify-center rounded-r-lg bg-[#e9eaee]">
            <svg viewBox="0 0 24 24" className="size-6" stroke="#111" strokeWidth="2">
              <rect x="1.500" y="2" width="21" height="16" fill="#a8a8a8" />
              <path d="M8 22H16M12 18V22" strokeWidth="3" />
            </svg>
          </div>
          <svg viewBox="0 0 24 24" className="mt-[15px] size-6" stroke="#000">
            <rect x="1" y="1" width="22" height="21" fill="#fff" strokeWidth="1.500" />
            <path d="M1.500 3H22.500" stroke="#3a4ac0" strokeWidth="2.500" />
            <path d="M3 21Q2 6 12 6Q22 6 21 21Z" fill="#3a55d8" stroke="none" />
            <text x="8" y="19" fontSize="14" fontWeight="700" fill="#fff" stroke="none" className="font-['Open_Sans',sans-serif]">?</text>
          </svg>
        </div>
      </div>
    </div>
  );
}

function Rhino() {
  return (
    <div className="relative flex w-[1280px] shrink-0 flex-col overflow-hidden border-t-2 border-r-[3px] border-l border-[#bfc6da] bg-[#e9eaee] text-[18px] leading-none text-[#3a3a3e]">
      {/* title */}
      <div className="flex h-[43px] shrink-0 items-center pr-[27px] pb-0.5 pl-[11px]">
        <svg viewBox="0 0 24 24" className="mt-px size-6">
          <rect width="24" height="24" fill="#000" />
          <path d="M2 2L7 9L9 3L12 10Q8 12 9 16Q13 15 15 11L23 15L16 23L9 22Q6 14 3 13Z" fill="#eee" />
          <text x="16.500" y="9.500" fontSize="9" fill="#fff" className="font-['Liberation_Sans']">8</text>
        </svg>
        <Fit w={395} className="ml-1.5 text-[17.500px]">Untitled - Rhino 8 Evaluation (82 Days Remaining)</Fit>
        <span className="ml-auto"><WinButtons color="#8d8d91" /></span>
      </div>
      {/* menu */}
      <div className="flex h-[30px] shrink-0 items-center pb-1.5 pl-[11px]">
        <Labels items={rhinoMenu} />
      </div>
      {/* command area */}
      <div className="flex h-[81px] shrink-0 bg-[#d7d8dc] pl-[3px]">
        <div className="flex w-4 items-center justify-center rounded-l-lg bg-[#e9eaee] pt-1"><Dots vertical /></div>
        <div className="flex flex-1 flex-col text-black">
          <div className="relative flex h-[52px] overflow-hidden border-b border-[#bfc6da]">
            <div className="flex w-[1230px] flex-col justify-end overflow-hidden bg-white pb-[1px] pl-0.5 leading-[32px]">
              <Fit w={1227}>{'Grasshopper file ( Browse ): "C:\\Users\\zhang\\Downloads\\Session02_RhinoAssets-20240909T051446Z-001\\Session02_RhinoAssets\\CellPhoneSta'}</Fit>
              <Fit w={563} className="-mb-[2px]">Grasshopper option ( Window  Document  Solver  Banner ): _Enter</Fit>
            </div>
            <div className="flex-1 bg-[#eeeeee]" />
          </div>
          <div className="flex h-[29px] items-center bg-white pb-[3px] pl-0.5">
            <Fit w={99} className="font-bold">Command:</Fit>
            <Fit w={9} className="ml-1">S</Fit>
            <div className="mt-[3px] ml-auto flex w-6 flex-col">
              <span className="flex h-[13px] items-center justify-center border border-[#9a9a9a] bg-[#f0f0f0]"><span className="border-x-[5px] border-b-[6px] border-x-transparent border-b-black" /></span>
              <span className="flex h-[13px] items-center justify-center border border-[#9a9a9a] bg-[#f0f0f0]"><span className="border-x-[5px] border-t-[6px] border-x-transparent border-t-black" /></span>
            </div>
          </div>
        </div>
      </div>
      {/* tabbed toolbar */}
      <div className="flex h-[84px] shrink-0 bg-[#d7d8dc] pt-1 pl-[3px]">
        <div className="flex w-4 items-center justify-center rounded-l-lg border-r border-[#d7d8dc] bg-[#e9eaee]"><Dots vertical /></div>
        <div className="flex flex-1 flex-col">
          <div className="flex h-[28px] items-center text-[18px] text-[#77777b]">
            <div className="mr-4 flex h-full w-[71px] items-center rounded-tr-lg bg-[#e9eaee] pt-0.5 pl-4 text-[#2a2a2e]"><Fit w={52}>Stan...</Fit></div>
            <div className="flex pt-0.5"><Labels items={rhinoTabs} /></div>
            <Gear className="ml-[14px]" />
          </div>
          <div className="flex h-[52px] rounded-tl-sm bg-[#e9eaee]">
            {topIcons.map(([n, m], i) => (
              <Cell key={i} more={m}>{n}</Cell>
            ))}
            <svg viewBox="0 0 12 10" className="mt-[17px] ml-1.5 h-2.5 w-3" fill="none" stroke="#909094" strokeWidth="1.500"><path d="M1 1L5 5L1 9M6.500 1L10.500 5L6.500 9" /></svg>
          </div>
        </div>
      </div>
      {/* body */}
      <div className="flex min-h-0 flex-1 bg-[#d7d8dc]">
        <div className="flex w-[186px] shrink-0 flex-col pt-[3px] pr-1.5 pl-[3px]">
          <div className="flex h-[622px] shrink-0 flex-col rounded-t-lg bg-[#e9eaee]">
            <div className="flex h-[15px] items-center justify-center border-b-2 border-[#d7d8dc]"><Dots /></div>
            <div className="mt-px grid w-[168px] grid-cols-4">
              {tools.map(([n, m], i) => (
                <Cell key={i} more={m}>{n}</Cell>
              ))}
            </div>
          </div>
          <div className="mt-[5px] flex h-[27px] items-center justify-between rounded-t-lg bg-[#e9eaee] pr-[7px] pl-[6px] text-[#6f6f73]">
            <Fit w={57} className="-mt-[7px]">OSnap</Fit>
            <Gear className="-mt-0.5" />
          </div>
          <div className="mt-0.5 flex h-[30px] items-center bg-[#d7d8dc]">
            <div className="flex h-full w-[54px] items-center justify-center rounded-tr-lg bg-[#e9eaee]">
              <svg viewBox="0 0 42 42" className="size-6" fill="none" stroke="#000" strokeWidth="2">
                <circle cx="20" cy="21" r="17" stroke="#888" /><path d="M20 21H42" /><rect x="16" y="17" width="8" height="8" fill="#fff" />
              </svg>
            </div>
            <svg viewBox="0 0 24 24" className="ml-4 size-[22px]" fill="none" stroke="#222" strokeWidth="1.300">
              <path d="M4 4H18L13 11V20H9V11Z" fill="url(#gray)" /><path d="M19 1H23V5M1 19V23H5" strokeWidth="1.500" />
            </svg>
          </div>
          <div className="flex-1 bg-[#e9eaee] pt-[6px]">
            {osnaps.map(([t, w]) => <OsnapRow key={t} t={t} w={w} />)}
            <div className="h-[26px]" />
            <OsnapRow t="Disable" w={64} />
          </div>
        </div>
        <div className="flex w-[781px] shrink-0 flex-col">
          <div className="relative mt-[4px] h-[1213px] w-[783px] shrink-0 border-2 border-[#e3e6ee] outline outline-[#c3cadc]">
            <Scene />
            <div className="absolute top-0 left-0 flex h-[27px] w-[141px] items-center bg-[#6ea0ff] pl-[9px] font-bold text-[#2b2f38]">
              <Fit w={104} className="-mt-[3px] text-[18.500px]">Perspective</Fit>
              <span className="ml-[11px] h-[23px] w-px bg-[#2b2f38]" />
              <span className="ml-[2px] border-x-[5.500px] border-t-[6px] border-x-transparent border-t-[#2b2f38]" />
            </div>
          </div>
          <div className="flex h-[34px] items-center border-t border-[#c3cadc] text-[#77777b]">
            <div className="mr-[14px] -ml-[3px] flex h-[30px] w-[126px] items-center rounded-b border border-t-0 border-[#bfc6da] bg-[#e9eaee] pl-[17px] text-[#2a2a2e]"><Fit w={98}>Perspective</Fit></div>
            <Labels items={[["Top", 323, 32], ["Front", 380, 45], ["Right", 450, 46]]} />
            <svg viewBox="0 0 14 14" className="ml-[26px] size-[14px]" fill="#fff" stroke="#77777b"><path d="M5 1H9V5H13V9H9V13H5V9H1V5H5Z" /></svg>
          </div>
        </div>
        <DisplayPanel />
      </div>
      {/* status */}
      <div className="flex h-[36px] shrink-0 items-center border-b-4 border-[#dcdee5] text-[18px] text-[#4c4c50]">
        <svg viewBox="0 0 22 22" className="ml-[10px] size-[22px]"><rect x="1.500" y="1.500" width="19" height="19" fill="#f0f0f0" stroke="#3b3b3f" strokeWidth="2.500" /><rect x="1" y="1" width="8" height="20" fill="#3b3b3f" /></svg>
        <Fit w={59} className="ml-[31px]">CPlane</Fit>
        <Fit w={92} className="ml-[108px]">x 2020.172</Fit>
        <Fit w={90} className="ml-[11px]">y -988.644</Fit>
        <Fit w={24} className="ml-[11px]">z 0</Fit>
        <Fit w={96} className="ml-[104px]">Millimeters</Fit>
        <span className="ml-[34px] size-6 bg-black" />
        <Fit w={63} className="ml-[9px]">Default</Fit>
        <Fit w={85} className="ml-[200px]">Grid Snap</Fit>
        <Fit w={51} className="ml-[31px]">Ortho</Fit>
        <Fit w={54} className="ml-[29px]">Planar</Fit>
        <svg viewBox="0 0 22 22" className="ml-[6px] size-[22px]"><rect x="1.500" y="1.500" width="19" height="19" fill="#f0f0f0" stroke="#3b3b3f" strokeWidth="2.500" /><rect x="13" y="1" width="8" height="20" fill="#3b3b3f" /></svg>
      </div>
      <div className="pointer-events-none absolute inset-y-0 right-0 w-12 bg-linear-to-r from-transparent to-black/25 [mask-image:linear-gradient(to_bottom,transparent,black_320px)]" />
    </div>
  );
}

/* ---------- Grasshopper ribbon ---------- */

const Hex = ({ children }: { children: ReactNode }) => (
  <Cell>
    <path d="M3.500 21L12 5.500H30L38.500 21L30 36.500H12Z" fill="url(#hex)" stroke="#0a0a0a" strokeWidth="2" strokeLinejoin="round" />
    <path d="M6 20L13.500 7.500H28.500L36 20" stroke="#777" strokeWidth=".8" />
    <g stroke="#fff">{children}</g>
  </Cell>
);
const Tile = ({ children, fill = "url(#tile)" }: { children: ReactNode; fill?: string }) => (
  <Cell>
    <rect x="4" y="4" width="34" height="34" rx="3" fill={fill} stroke="#555" strokeWidth="1.800" />
    {children}
  </Cell>
);

type Panel = { name: string; w: number; nw: number; more: boolean; cols: [ReactNode, ReactNode][][] };
const panels: Panel[] = [
  {
    name: "Geometry", w: 288, nw: 73, more: true,
    cols: [
      [[<Hex><path d="M16 16L26 26M26 16L16 26" strokeWidth="4" /></Hex>, <Hex><path d="M14 28L24 18" strokeWidth="4" /><path d="M19 15L28 13L26 23Z" fill="#fff" /></Hex>]],
      [
        [<Hex><circle cx="21" cy="21" r="8" strokeWidth="3" /></Hex>, <Hex><path d="M15 14Q27 17 27 30M20 30H32M10 16L16 12" strokeWidth="2.600" /></Hex>],
        [<Hex><g transform="rotate(-50 21 21)"><ellipse cx="21" cy="21" rx="12" ry="6" strokeWidth="1.800" /><ellipse cx="21" cy="21" rx="7" ry="3" strokeWidth="1.500" /></g></Hex>, <Hex><path d="M16 27L27 15" strokeWidth="2.400" /><rect x="12" y="25" width="5" height="5" /><rect x="26" y="11" width="5" height="5" /></Hex>],
        [<Hex><path d="M11 18L29 11L33 22L14 31Z" fill="#eee" /><path d="M16 21L21 19V24L17 26ZM23 18L28 16L29 20L24 22Z" fill="#999" stroke="none" /></Hex>, <Hex><path d="M21 13L29 21L21 29L13 21ZM12 11L18 17M30 11L24 17M12 31L18 25M30 31L24 25" strokeWidth="2" /></Hex>],
      ],
      [
        [<Hex><path d="M13 15L23 11L30 14V27L21 31L13 27Z" fill="#d8d8d8" /><path d="M21 18V31M13 15L21 18L30 14" stroke="#777" /></Hex>, <Hex><path d="M21 10V31M12 16H30M12 26H30M14 11L28 31M28 11L14 31M14 12V30M28 12V30M10 21H32" strokeWidth="1.300" stroke="#ccc" /></Hex>],
        [<Hex><path d="M11 21L20 12L33 18L24 30Q14 32 11 21Z" fill="url(#gray)" /><ellipse cx="26" cy="16" rx="7" ry="5" fill="#ddd" stroke="#888" transform="rotate(30 26 16)" /></Hex>, <Hex><path d="M17 13L31 11V31L11 27Q17 22 17 13Z" fill="url(#gray)" /><path d="M24 12Q24 24 21 29M15 21L31 21" stroke="#666" /></Hex>],
      ],
    ],
  },
  {
    name: "Primitive", w: 89, nw: 63, more: false,
    cols: [
      [
        [<Hex><circle cx="21" cy="21" r="8.500" fill="#fff" /><path d="M15 27A8.500 8.500 0 0 0 27 15Q25 27 15 27Z" fill="#111" stroke="none" /></Hex>, <Hex><text x="21" y="30" textAnchor="middle" fontSize="24" fontWeight="700" fill="#fff" stroke="none" className="font-['Liberation_Serif']">7</text></Hex>],
        [<Hex><text x="21" y="28" textAnchor="middle" fontSize="21" fontWeight="700" fill="#fff" stroke="none" className="font-['Liberation_Serif']">0.1</text></Hex>, <Hex><text x="21" y="29" textAnchor="middle" fontSize="26" fontWeight="700" fill="#fff" stroke="none" className="font-['Liberation_Serif']">A</text></Hex>],
      ],
    ],
  },
  {
    name: "Input", w: 205, nw: 38, more: true,
    cols: [
      [[
        <Tile><path d="M21 11V23" strokeWidth="4" /><path d="M15 20H27L21 28Z" fill="#111" stroke="none" /><path d="M9 30H33M10 33V30M14 34V30M18 33V30M22 34V30M26 33V30M31 34V30" strokeWidth="2.200" /></Tile>,
        <Tile fill="#ffca28"><path d="M8 28Q14 20 13 30Q18 18 19 22Q18 33 24 19Q28 12 26 24Q28 28 33 11" stroke="#9a6400" strokeWidth="2.800" /></Tile>,
      ]],
      [
        [<Tile><rect x="15" y="9" width="13" height="25" fill="#222" /><rect x="16.500" y="10" width="10" height="11" fill="#ccc" stroke="none" /></Tile>, <Cell><circle cx="21" cy="21" r="16.500" fill="#aaa" stroke="#666" strokeWidth="1.800" /><circle cx="20" cy="21" r="11.500" fill="#222" stroke="#111" /><path d="M28 14L36 21L28 28Z" fill="#222" stroke="none" /></Cell>],
        [<Tile><text x="15" y="17" fontSize="15" fontWeight="700" fontStyle="italic" fill="#8a8a8a" stroke="none" className="font-['Liberation_Sans']">4</text><text x="13" y="36" fontSize="23" fontWeight="700" fill="#333" stroke="none" className="font-['Liberation_Sans']">5</text></Tile>, <Tile fill="#6a6a6a"><path d="M9 12.500H33M9 21H33M9 29.500H33" stroke="#222" strokeWidth="7" /><path d="M10 12.500H32M10 21H32M10 29.500H32" stroke="#ccc" strokeWidth="4.500" /></Tile>],
      ],
      [[
        <Tile fill="url(#pink)"><rect x="5" y="5" width="32" height="14" fill="#ddd" fillOpacity=".45" stroke="none" /><path d="M5 27H37" stroke="#fff" strokeWidth="2" /><circle cx="6" cy="27" r="2.600" fill="#fff" /><circle cx="28" cy="27" r="2.600" fill="#fff" /></Tile>,
        <Tile fill="#35c53c">
          <g stroke="none">
            {["#bfe87c", "#9bdc2c", "#7dc82c", "#b8f08c", "#4fbf1a", "#8fe82c", "#2ca01c", "#5ae070", "#1f8f10", "#0a5c08", "#38d838", "#4cf0a0", "#48c81c", "#0a3c08", "#30c838", "#5cfcc8"].map((c, i) => (
              <rect key={i} x={5 + (i % 4) * 8} y={5 + Math.floor(i / 4) * 8} width="8" height="8" fill={c} />
            ))}
          </g>
        </Tile>,
      ]],
    ],
  },
  {
    name: "Rhino", w: 105, nw: 43, more: true,
    cols: [
      [[
        <Hex><g transform="translate(5 6) scale(.78)"><LayerIcon /></g></Hex>,
        <Hex><path d="M21 21Q24 18 24 22Q22 27 17 24Q13 18 20 14Q29 12 30 22Q28 32 18 31Q9 28 11 18Q14 10 22 10" stroke="#b8701c" strokeWidth="2.600" /></Hex>,
      ]],
      [[
        <Cell>
          <path d="M3.500 21L12 5.500H30L38.500 21L30 36.500H12Z" fill="#c98c1c" stroke="#0a0a0a" strokeWidth="2.600" strokeLinejoin="round" />
          <path d="M12 6L32 34M22 6L37 25M6 17L20 36M30 6L10 34M20 6L5 25M36 17L22 36" stroke="#1e1a10" strokeWidth="3" />
        </Cell>,
        <Hex><path d="M13 12H29" stroke="#bbb" strokeWidth="2.500" /><path d="M9 18H33" stroke="#ddd" strokeWidth="2" strokeDasharray="6 1.500" /><path d="M6 24H36" stroke="#e0b020" strokeWidth="2.500" strokeDasharray="4 1" /><path d="M11 30H32" stroke="#eee" strokeWidth="2.500" strokeDasharray="3 3" /></Hex>,
      ]],
    ],
  },
  {
    name: "Util", w: 163, nw: 25, more: true,
    cols: [
      [[
        <Cell><path d="M25 9Q25 20 13 27M25 9Q30 18 28 30" stroke="#7a3030" strokeWidth="2" /><path d="M12 15Q14 6 26 7Q23 16 12 15Z" fill="#6cb82c" stroke="#3b7a10" /><circle cx="13" cy="27" r="6.500" fill="#e01818" stroke="#900" /><circle cx="28" cy="31" r="6.500" fill="#e01818" stroke="#900" /><circle cx="11" cy="25" r="1.500" fill="#fff" stroke="none" /></Cell>,
        <Tile><path d="M5 36H37" strokeWidth="4" /><path d="M21 35V24L13 17M21 26L29 18M21 24L20 12M16 20L10 20M27 20L33 19" strokeWidth="3" /><g fill="#222" stroke="none" fillOpacity=".75"><circle cx="13" cy="15" r="4" /><circle cx="21" cy="11" r="4.500" /><circle cx="29" cy="15" r="4" /><circle cx="9" cy="20" r="2.500" /><circle cx="33" cy="20" r="2.500" /></g></Tile>,
      ]],
      [[
        <Cell><path d="M6 16H19V9L36 22L19 34V27H6Z" fill="#444" strokeWidth="1.500" /></Cell>,
        <Cell><path d="M6 16H19V9L36 22L19 34V27H6Z" fill="#eee" stroke="#555" strokeWidth="1.500" /></Cell>,
      ]],
      [[
        <Cell><ellipse cx="16" cy="19" rx="9" ry="14" fill="url(#gball)" stroke="#555" transform="rotate(20 16 19)" /><circle cx="15" cy="20" r="2.800" fill="#555" stroke="none" /><ellipse cx="27" cy="27" rx="8" ry="12" fill="#e8418c" stroke="#a01058" transform="rotate(20 27 27)" /><circle cx="27" cy="28" r="3" fill="#a01058" stroke="#fff" /></Cell>,
        <Cell><path d="M17 8H22M18 8V19L8 34Q10 37 20 37Q29 37 31 34L22 19V8" fill="#f6eaf2" stroke="#7a2050" strokeWidth="1.600" /><path d="M14 24H26L31 34Q29 37 20 37Q10 37 8 34Z" fill="#e0307c" stroke="none" /></Cell>,
      ]],
    ],
  },
];

const ghMenu: Slot[] = [["File", 1300, 30], ["Edit", 1356, 34], ["View", 1416, 41], ["Display", 1483, 64], ["Solution", 1573, 70], ["Help", 1670, 40]];
const ghTabs: Slot[] = [
  ["Maths", 1384, 53], ["Sets", 1463, 35], ["Vector", 1524, 56], ["Curve", 1607, 49], ["Surface", 1684, 63], ["Mesh", 1773, 47],
  ["Intersect", 1847, 73], ["Transform", 1948, 86], ["Display", 2061, 64], ["Rhino", 2151, 51], ["Kangaroo2", 2228, 94],
];

function RibbonPanel({ p }: { p: Panel }) {
  return (
    <div className="flex h-[109px] shrink-0 flex-col overflow-hidden rounded-md border border-[#8a8a8a] bg-linear-to-b from-[#dcdcdc] to-[#f2f2f2]" style={{ width: p.w }}>
      <div className="flex h-[87px] shrink-0 items-center pt-px pl-[2px]">
        {p.cols.map((g, gi) => (
          <React.Fragment key={gi}>
            {gi > 0 && <span className="mx-[7px] h-[78px] w-px bg-linear-to-b from-transparent via-[#9a9a9a] to-transparent" />}
            {g.map((c, ci) => (
              <div key={ci} className="flex w-[42px] flex-col">{c[0]}{c[1]}</div>
            ))}
          </React.Fragment>
        ))}
      </div>
      <div className={`relative -mx-px flex flex-1 items-center justify-center bg-linear-to-b from-[#2c2c2c] to-[#1c1c1c] text-[16px] leading-none text-white ${p.more ? "pr-4" : ""}`}>
        <Fit w={p.nw} className="-mt-[5px]">{p.name}</Fit>
        {p.more && (
          <svg viewBox="0 0 12 12" className="absolute top-1 right-[3px] size-3" fill="#999" stroke="#999"><path d="M6 1V7" strokeWidth="2.500" /><path d="M1.500 6H10.500L6 11Z" stroke="none" /></svg>
        )}
      </div>
    </div>
  );
}

/* ---------- Grasshopper canvas ---------- */

const wire = (x0: number, y0: number, x1: number, y1: number) => {
  const d = Math.hypot(x1 - x0, y1 - y0) / 2;
  return `M${x0} ${y0}C${x0 + d} ${y0} ${x1 - d} ${y1} ${x1} ${y1}`;
};

function Grip({ x, y, left }: { x: number; y: number; left?: boolean }) {
  return (
    <path
      d={left ? `M${x + 1} ${y - 5}A5 5 0 0 0 ${x + 1} ${y + 5}Z` : `M${x - 1} ${y - 5}A5 5 0 0 1 ${x - 1} ${y + 5}Z`}
      fill="#fff"
      stroke="#000"
      strokeWidth="2"
    />
  );
}

const grips: [number, number, boolean][] = [
  [1425, 521.5, true], [1643, 521.5, false], [1487, 587.5, true], [1559, 587.5, false],
  [1847, 595, true], [2232, 595, false], [2273, 599, true],
  [2000, 657, true], [2000, 681, true], [2074, 669, false],
  [2000, 725, true], [2000, 749, true], [2074, 737.5, false],
  [2428, 691.5, true], [2428, 715.5, true], [2502, 703.5, false],
  [1371, 831.5, true], [1757, 831.5, false],
  [1358, 928, true], [1587, 928, false], [1681, 922.5, true], [1681, 944, true], [1753, 933, false],
  [1636, 972.5, false], [1365, 1049, true], [1593, 1049, false], [1642, 1083, false],
  [1685, 1052, true], [1685, 1074, true], [1758, 1063.5, false],
  [1373, 1216, true], [1758, 1216, false], [1511, 1423, true], [1634, 1423, false],
];

const params: [string, number, number, number, number, boolean][] = [
  ["Pln Cell Phone Stand Design Origin", 1426, 510, 216, 201, true],
  ["Brep void", 1488, 576, 69, 54, false],
  ["Pln Cell Phone Stand Sphere 1 Origin", 1359, 917, 227, 212, true],
  ["Pln Cell Phone Stand Sphere 2 Origin", 1366, 1038, 226, 212, true],
  ["Brep Cylinder Void", 1512, 1412, 121, 107, true],
];

function Param({ n }: { n: (typeof params)[number] }) {
  const [t, x, y, w, tw, dark] = n;
  return (
    <div
      className={`absolute flex h-[23px] items-center justify-center rounded-[3px] border border-[#2a2a2a] shadow-[0_1px_1px_rgba(0,0,0,.3)] ${dark ? "bg-linear-to-b from-[#b0aeba] to-[#908e9c]" : "bg-linear-to-b from-[#ededed] to-[#cfcfcf]"}`}
      style={{ left: x, top: y, width: w }}
    >
      <Fit w={tw} className="-mt-0.5 -ml-px">{t}</Fit>
    </div>
  );
}

function Slider({ t, x, y, lw, w, tw }: { t: string; x: number; y: number; lw: number; w: number; tw: number }) {
  return (
    <div className="absolute flex h-[23px] overflow-hidden rounded-[3px] border border-[#2a2a2a] bg-linear-to-b from-[#e6e6e6] to-[#cacaca]" style={{ left: x, top: y, width: w }}>
      <div className="flex shrink-0 items-center justify-center border-r border-[#2a2a2a] bg-linear-to-b from-[#b0aeba] to-[#908e9c]" style={{ width: lw }}>
        <Fit w={tw} className="-mt-0.5 -ml-px">{t}</Fit>
      </div>
      <div className="relative ml-[9px] flex w-[110px] items-center">
        <svg viewBox="0 0 110 22" className="absolute inset-0 h-[21px] w-[110px]" stroke="#a8a8a8" fill="none">
          <path d="M0.500 6V11H40M68 11H109.500V6M11 8V11M22 8V11M33 8V11M77 8V11M88 8V11M99 8V11" />
          <circle cx="44" cy="11" r="3.300" stroke="#000" strokeWidth="2.200" fill="#fff" />
        </svg>
        <Fit w={14} className="-mt-0.5 ml-[52px]">40</Fit>
      </div>
    </div>
  );
}

function Comp({ t, x, y, w, h, ins, out, tone, ty }: { t: string; x: number; y: number; w: number; h: number; ins: string[]; out: string; tone: "light" | "dark" | "green"; ty: number }) {
  const bg = {
    light: "border-[#2a2a2a] bg-linear-to-b from-[#ececec] to-[#cccccc]",
    dark: "border-[#2a2a2a] bg-linear-to-b from-[#b0aeba] to-[#8c8a98]",
    green: "border-[#134a08] bg-linear-to-b from-[#9cf04c] to-[#80d830]",
  }[tone];
  return (
    <div className={`absolute flex items-center rounded-[4px] border ${bg} shadow-[0_1px_1px_rgba(0,0,0,.3)]`} style={{ left: x, top: y, width: w, height: h }}>
      <div className="-mt-0.5 flex w-5 flex-col items-center justify-between" style={{ height: ty }}>
        {ins.map((s) => <span key={s} className="leading-none">{s}</span>)}
      </div>
      <div className={`flex h-[calc(100%-4px)] w-[27px] items-center justify-center rounded-[3px] border ${tone === "green" ? "border-[#082808] bg-linear-to-b from-[#356035] to-[#183f18] text-[#c8ffb0]" : "border-black bg-linear-to-b from-[#4a4a4a] to-[#303030] text-white"}`}>
        <span className="-rotate-90 text-[16px] font-bold tracking-tight">{t}</span>
      </div>
      <span className="-mt-[3px] ml-[5px]">{out}</span>
    </div>
  );
}

function Note({ x, y, w, h, lines, pad, scroll }: { x: number; y: number; w: number; h: number; lines: string[]; pad: number; scroll?: boolean }) {
  return (
    <div className="absolute flex flex-col overflow-hidden rounded-[4px] border border-[#1f3f3c] bg-[#87fff8]" style={{ left: x, top: y, width: w, height: h }}>
      <div className="flex h-[19px] shrink-0 items-center justify-center border-b-[1.500px] border-[#12302e] bg-[#6bcdc8] shadow-[inset_0_1px_0_#a8f0ec]"><Fit w={31} className="-mt-0.5 -ml-1">notes</Fit></div>
      <div
        className={`flex-1 bg-linear-to-b from-[#58b8b2] via-[#87fff8] via-[8px] to-[#87fff8] text-center font-['Liberation_Mono',monospace] text-[17.800px] leading-[19.600px] font-bold whitespace-pre text-[#07211f] ${scroll ? "pr-[12px]" : "pr-[9px]"}`}
        style={{ paddingTop: pad }}
      >
        {lines.map((l) => <div key={l} className="flex justify-center">{l}</div>)}
      </div>
      {scroll && <span className="absolute top-[19px] right-px h-[76px] w-[7px] rounded bg-[#549e9a]" />}
    </div>
  );
}

function Canvas() {
  return (
    <div className="relative min-h-0 flex-1 overflow-hidden bg-[#d4d0c8]">
      <div className="absolute -top-[303px] -left-[1283px] h-[1527px] w-[2558px] font-['Open_Sans',sans-serif] text-[13.500px] leading-none text-[#141414]">
        <svg viewBox="0 0 2558 1527" className="absolute inset-0 h-[1527px] w-[2558px]" fill="none">
          <g stroke="#000" strokeOpacity=".13">
            {Array.from({ length: 7 }, (_, i) => <path key={i} d={`M${Math.round(1426 + i * 162.6) + 0.5} 303V1493`} />)}
            {Array.from({ length: 22 }, (_, i) => <path key={i} d={`M1283 ${Math.round(342.3 + i * 54.22) + 0.5}H2556`} />)}
          </g>
          <rect x="1270" y="767.500" width="497" height="714" fill="#b69cec" fillOpacity=".84" stroke="#8f78c4" strokeWidth="1.200" />
          <defs>
            <linearGradient id="w1" gradientUnits="userSpaceOnUse" x1="1760" y1="1063" x2="1998" y2="725">
              <stop offset="0" stopColor="#7ad41c" /><stop offset=".4" stopColor="#86c850" /><stop offset="1" stopColor="#8c8c86" stopOpacity=".6" />
            </linearGradient>
            <linearGradient id="w2" gradientUnits="userSpaceOnUse" x1="1594" y1="0" x2="1684" y2="0">
              <stop offset="0" stopColor="#7f7596" /><stop offset="1" stopColor="#7ecb3c" />
            </linearGradient>
            <linearGradient id="w3" gradientUnits="userSpaceOnUse" x1="1643" y1="0" x2="1684" y2="0">
              <stop offset="0" stopColor="#7f8590" /><stop offset="1" stopColor="#7ecb3c" />
            </linearGradient>
          </defs>
          <g stroke="#000" strokeOpacity=".6" strokeWidth="3">
            <path d="M1283 521.500H1424M1283 587.500H1486M1644 521.500C1990 521.500 2240 519 2558 512.500M2503 703.500H2558M1283 1049H1364M1283 926.500L1357 928M1283 1421.500L1510 1423" />
            <path d={wire(1560, 587.5, 1998, 681)} />
            <path d={wire(1560, 587.5, 1998, 749)} />
            <path d={wire(2076, 669, 2426, 691.5)} />
            <path d={wire(2076, 737.5, 2426, 715.5)} />
            <path d={wire(1755, 933, 1998, 657)} />
            <path d={wire(1588, 928, 1680, 922.5)} />
            <path d={wire(1638, 972.5, 1680, 944)} />
            <path d={wire(1636, 1423, 2906, 730)} />
          </g>
          <g strokeWidth="3">
            <path d={wire(1760, 1063.5, 1998, 725)} stroke="url(#w1)" />
            <path d={wire(1595, 1049, 1684, 1052)} stroke="url(#w2)" />
            <path d={wire(1644, 1083, 1684, 1074)} stroke="url(#w3)" />
          </g>
          {grips.map(([x, y, l], i) => <Grip key={i} x={x} y={y} left={l} />)}
        </svg>
        {params.map((n) => <Param key={n[0]} n={n} />)}
        <Slider t="Sphere 1 Solid Radius" x={1367} y={961} lw={137} w={269} tw={124} />
        <Slider t="Sphere 2 Void radius" x={1378} y={1072} lw={132} w={263} tw={119} />
        <Comp t="SDiff" x={2001} y={642} w={72} h={53} ins={["A", "B"]} out="R" tone="light" ty={38} />
        <Comp t="SDiff" x={2001} y={711} w={72} h={53} ins={["A", "B"]} out="R" tone="dark" ty={38} />
        <Comp t="SDiff" x={2429} y={677} w={72} h={53} ins={["A", "B"]} out="R" tone="dark" ty={38} />
        <Comp t="Sph" x={1682} y={909} w={70} h={49} ins={["B", "R"]} out="S" tone="light" ty={35} />
        <Comp t="Sph" x={1686} y={1039} w={71} h={49} ins={["B", "R"]} out="S" tone="green" ty={35} />
        <Note x={1848} y={560} w={384} h={70} pad={3} lines={["Let us subtract the void from the", "spheres to get flat bottoms."]} />
        <Note x={2274} y={565} w={384} h={70} pad={-1} lines={["Let us subtract the smooth", "spherical form from the larger", "spherical form."]} />
        <Note x={1372} y={778} w={384} h={109} pad={32} lines={["Let us create 2 nested spheres."]} />
        <Note x={1373} y={1163} w={384} h={108} pad={0} scroll lines={["In the future we may need to do", "something if the spheres do not", "touch the origin plane as this", "means we are proposing they float", "in the air above the plane."]} />
        <div className="absolute top-[1451px] left-[1278px] h-[41px] w-[15px] border border-black bg-linear-to-b from-[#d8d8d8] via-[#8a8a8a] via-40% to-[#6a6a6a]" />
        <svg viewBox="0 0 90 80" className="absolute top-[1407px] left-[2464px] h-20 w-[90px]">
          <circle cx="46" cy="40" r="30" fill="none" stroke="#222" strokeWidth="3" />
          <circle cx="46" cy="40" r="27" fill="none" stroke="#eee" strokeWidth="4" />
          <circle cx="46" cy="40" r="24" fill="url(#lens)" stroke="#333" strokeWidth="1.500" />
          <path d="M4 24L24 16L20 40Q12 36 12 28Z" fill="#111" />
          <g fill="#222">
            {[0, 45, 90, 135, 180, 270, 315].map((a) => <path key={a} d="M46 7L50 13H42Z" transform={`rotate(${a} 46 40)`} />)}
          </g>
        </svg>
      </div>
    </div>
  );
}

/* ---------- Grasshopper window ---------- */

const Drop = () => <svg viewBox="0 0 8 5" className="h-[5px] w-2 shrink-0"><path d="M0 0H8L4 5Z" /></svg>;
const Rule = () => <span className="block h-[36px] w-px shrink-0 bg-[#b5b5b5]" />;

function Tube({ fill, wire: line }: { fill: string; wire?: boolean }) {
  return (
    <g strokeLinejoin="round">
      <path d="M3 21L19 3Q30 1 34 11L36 18L20 36Q7 35 3 21Z" fill={fill} stroke={line ? "#333" : "#5a0808"} strokeWidth="1.600" />
      <ellipse cx="26" cy="13" rx="7.500" ry="10" fill="#000" fillOpacity={line ? 0 : 0.2} stroke={line ? "#333" : "#7a0c0c"} transform="rotate(-35 26 13)" />
      {line && <ellipse cx="26" cy="13" rx="4.500" ry="6.500" fill="none" stroke="#777" transform="rotate(-35 26 13)" />}
      {line && <ellipse cx="13" cy="26" rx="7" ry="9" fill="none" stroke="#777" transform="rotate(-35 13 26)" />}
    </g>
  );
}

function GhToolbar() {
  return (
    <div className="flex h-[45px] shrink-0 items-center bg-linear-to-b from-white to-[#f0f0f0] pb-0.5 pl-[4px]">
      <svg viewBox="0 0 30 34" className="h-[34px] w-[30px] shrink-0" stroke="#666" strokeWidth="1.300">
        <path d="M3 14V5L6 1H13L16 5H25V18" fill="#eee" />
        <path d="M1 33V14H9L13 11H29V33Z" fill="url(#fold)" stroke="#2d7010" strokeWidth="1.600" />
      </svg>
      <svg viewBox="0 0 34 34" className="ml-[11px] size-[34px] shrink-0">
        <rect x="1" y="1" width="32" height="32" rx="2" fill="#1b6fe0" stroke="#12307a" strokeWidth="1.800" />
        <rect x="7" y="2" width="20" height="15" fill="#e9f1fb" />
        <path d="M9 6H25M9 10H25" stroke="#a8bcd8" />
        <rect x="8" y="21" width="17" height="12" fill="#b8c4d8" stroke="#12307a" />
        <rect x="10" y="23" width="6" height="9" fill="#17489c" />
      </svg>
      <span className="ml-[8px]"><Rule /></span>
      <div className="ml-[5px] flex h-[32px] w-[246px] shrink-0 items-center justify-between border border-[#7a7a7a] bg-white pr-[7px] pl-[4px] text-[18px] text-black">
        <Fit w={48} className="-mt-0.5">108%</Fit>
        <svg viewBox="0 0 12 8" className="h-2 w-3" fill="none" stroke="#555" strokeWidth="1.200"><path d="M1 1L6 6.500L11 1" /></svg>
      </div>
      <svg viewBox="0 0 34 34" className="ml-[6px] size-[34px] shrink-0" fill="none" stroke="#1d1d1d" strokeWidth="5">
        <path d="M3.500 13V3.500H12M22 3.500H30.500V13M30.500 21V30.500H22M12 30.500H3.500V21" />
        <path d="M13 13L21 21M21 13L13 21" strokeWidth="3" />
      </svg>
      <span className="mt-1 ml-[9px] flex"><Drop /></span>
      <svg viewBox="0 0 36 26" className="ml-[8px] h-[26px] w-9 shrink-0">
        <path d="M1 13Q18 -8 35 13Q18 31 1 13Z" fill="#e8f4fa" stroke="#222" strokeWidth="2.400" />
        <circle cx="18" cy="12" r="8.500" fill="#49b4ea" stroke="#125a90" strokeWidth="1.500" />
        <circle cx="18" cy="12" r="4" fill="#0b1f38" />
        <circle cx="20" cy="9" r="2" fill="#fff" />
      </svg>
      <span className="mt-1 ml-[7px] flex"><Drop /></span>
      <svg viewBox="0 0 34 34" className="ml-[8px] size-[34px] shrink-0" fill="none">
        <path d="M3 9Q8 12 4 20Q0 33 12 31" stroke="#5a1010" strokeWidth="2.400" />
        <path d="M13 19L31 2V17L21 29Z" fill="#f04438" stroke="#a81818" />
        <path d="M24 9L31 2V17L27 22Z" fill="#b81c1c" />
        <path d="M13 19L21 29L9 32Z" fill="#f0c060" stroke="#7a4a10" />
      </svg>
      <div className="ml-auto flex items-center pr-[7px]">
        <svg viewBox="0 0 36 36" className="size-9">
          <path d="M6 12L14 2Q26 2 29 11L25 24H10Z" fill="#d8d8d8" stroke="#666" strokeWidth="1.300" />
          <path d="M5 28Q6 19 18 22Q30 19 31 28Q28 35 18 35Q8 35 5 28Z" fill="#222" stroke="#777" />
          <ellipse cx="22" cy="9" rx="5" ry="6.500" fill="#f4f4f4" stroke="#888" transform="rotate(-35 22 9)" />
        </svg>
        <svg viewBox="0 0 38 38" className="ml-[4px] size-9"><Tube fill="#f2f2f2" wire /></svg>
        <span className="ml-[4px] flex h-[42px] w-10 items-center justify-center border-[1.500px] border-[#1a80d8] bg-[#f4f8fc]">
          <svg viewBox="0 0 38 38" className="size-[35px]"><Tube fill="#c41414" /></svg>
        </span>
        <span className="ml-[9px]"><Rule /></span>
        <svg viewBox="0 0 38 38" className="ml-[12px] size-9">
          <path d="M4 8Q14 14 10 26Q10 32 18 36L30 38Q14 40 8 32Q4 24 4 8Z" fill="#999" fillOpacity=".6" />
          <path d="M11 7Q20 1 30 4Q35 12 34 20L20 33Q14 30 16 22Q18 12 11 7Z" fill="#12a5a0" stroke="#0a5c5a" strokeWidth="1.500" />
          <ellipse cx="25" cy="12" rx="6" ry="8" fill="#0a7a78" stroke="#0a5c5a" transform="rotate(-35 25 12)" />
          <path d="M2 4L14 14M14 33L30 37" stroke="#222" />
        </svg>
        <svg viewBox="0 0 38 38" className="ml-[2px] size-9">
          <path d="M4 22Q4 12 10 12L26 31Q8 44 4 22Z" fill="#ddd" stroke="#666" strokeWidth="1.400" />
          <path d="M9 12L19 2Q34 1 36 15L27 30Z" fill="#66b81c" stroke="#2c6608" strokeWidth="1.400" />
          <ellipse cx="26" cy="11" rx="6" ry="8" fill="#4a9010" stroke="#2c6608" transform="rotate(-35 26 11)" />
          <path d="M3 7L31 36" stroke="#111" strokeWidth="1.800" />
        </svg>
        <svg viewBox="0 0 38 38" className="ml-[4px] size-9">
          <circle cx="19" cy="18" r="15.500" fill="#e8e8e8" stroke="#666" strokeWidth="1.500" />
          <path d="M19 2.500A15.500 15.500 0 0 0 19 33.500Z" fill="#f08c1c" stroke="#a04808" strokeWidth="1.500" />
        </svg>
        <span className="ml-[7px]"><Rule /></span>
        <svg viewBox="0 0 36 36" className="ml-[4px] size-9">
          <path d="M18 3L29 8L32 19L26 30L16 32L6 25L4 13L9 6Z" fill="#7cb8f8" stroke="#2450a8" strokeWidth="2" />
          <ellipse cx="14" cy="12" rx="6" ry="5" fill="#cfe6ff" />
        </svg>
        <span className="mt-1 ml-[2px] flex"><Drop /></span>
      </div>
    </div>
  );
}

function Grasshopper() {
  return (
    <div className="flex w-[1278px] shrink-0 flex-col border-t-2 border-l border-[#707070] bg-[#f0f0f0] text-[18px] leading-none text-black">
      <div className="flex h-[43px] shrink-0 items-center bg-[#f3f3f3] pr-[26px] pb-0.5 pl-[12px] text-[17.500px]">
        <Fit w={357}>Grasshopper - CellPhoneStand_Simple_2024*</Fit>
        <span className="ml-auto"><WinButtons color="#111" /></span>
      </div>
      <div className="flex h-11 shrink-0 items-center bg-linear-to-r from-[#f0f0f0] to-[#fdfdfd] pr-[15px] pb-px pl-[19px]">
        <Labels items={ghMenu} />
        <Fit w={255} className="ml-auto">CellPhoneStand_Simple_2024</Fit>
      </div>
      <div className="flex h-[33px] shrink-0 items-end bg-[#f0f0f0] text-[#6d6d6d]">
        <div className="relative mr-[13px] -mb-px flex h-[34px] w-[90px] items-center rounded-t-lg border border-b-0 border-[#8f8f8f] bg-linear-to-b from-white to-[#e4e4e4] pb-1.5 pl-[12px] text-black">
          <Fit w={62}>Params</Fit>
        </div>
        <div className="flex h-[32px] items-center"><Labels items={ghTabs} /></div>
      </div>
      <div className="flex h-[134px] shrink-0 gap-[6px] rounded-tr-xl border-t border-[#8f8f8f] bg-linear-to-b from-[#d6d6d6] to-[#f0f0f0] pt-[3px] pl-[4px]">
        {panels.map((p) => <RibbonPanel key={p.name} p={p} />)}
      </div>
      <div className="flex min-h-0 flex-1 flex-col border-t-2 border-r-2 border-l-2 border-[#8a8a8a] border-r-white">
        <GhToolbar />
        <Canvas />
      </div>
      <div className="flex h-[34px] shrink-0 items-center border-t-2 border-b-2 border-t-white border-b-[#8a8a8a] pr-[58px] pl-[10px] shadow-[inset_0_1px_0_#c4c4c4]">
        <Fit w={14} className="mt-1 font-bold">...</Fit>
        <Fit w={73} className="ml-auto text-[17px] text-[#777]">1.0.0008</Fit>
      </div>
    </div>
  );
}

export default function App() {
  return (
    <div className="flex h-[1527px] w-[2558px] overflow-hidden bg-[#e9eaee] font-['Open_Sans',sans-serif]">
      <Defs />
      <Rhino />
      <Grasshopper />
    </div>
  );
}
